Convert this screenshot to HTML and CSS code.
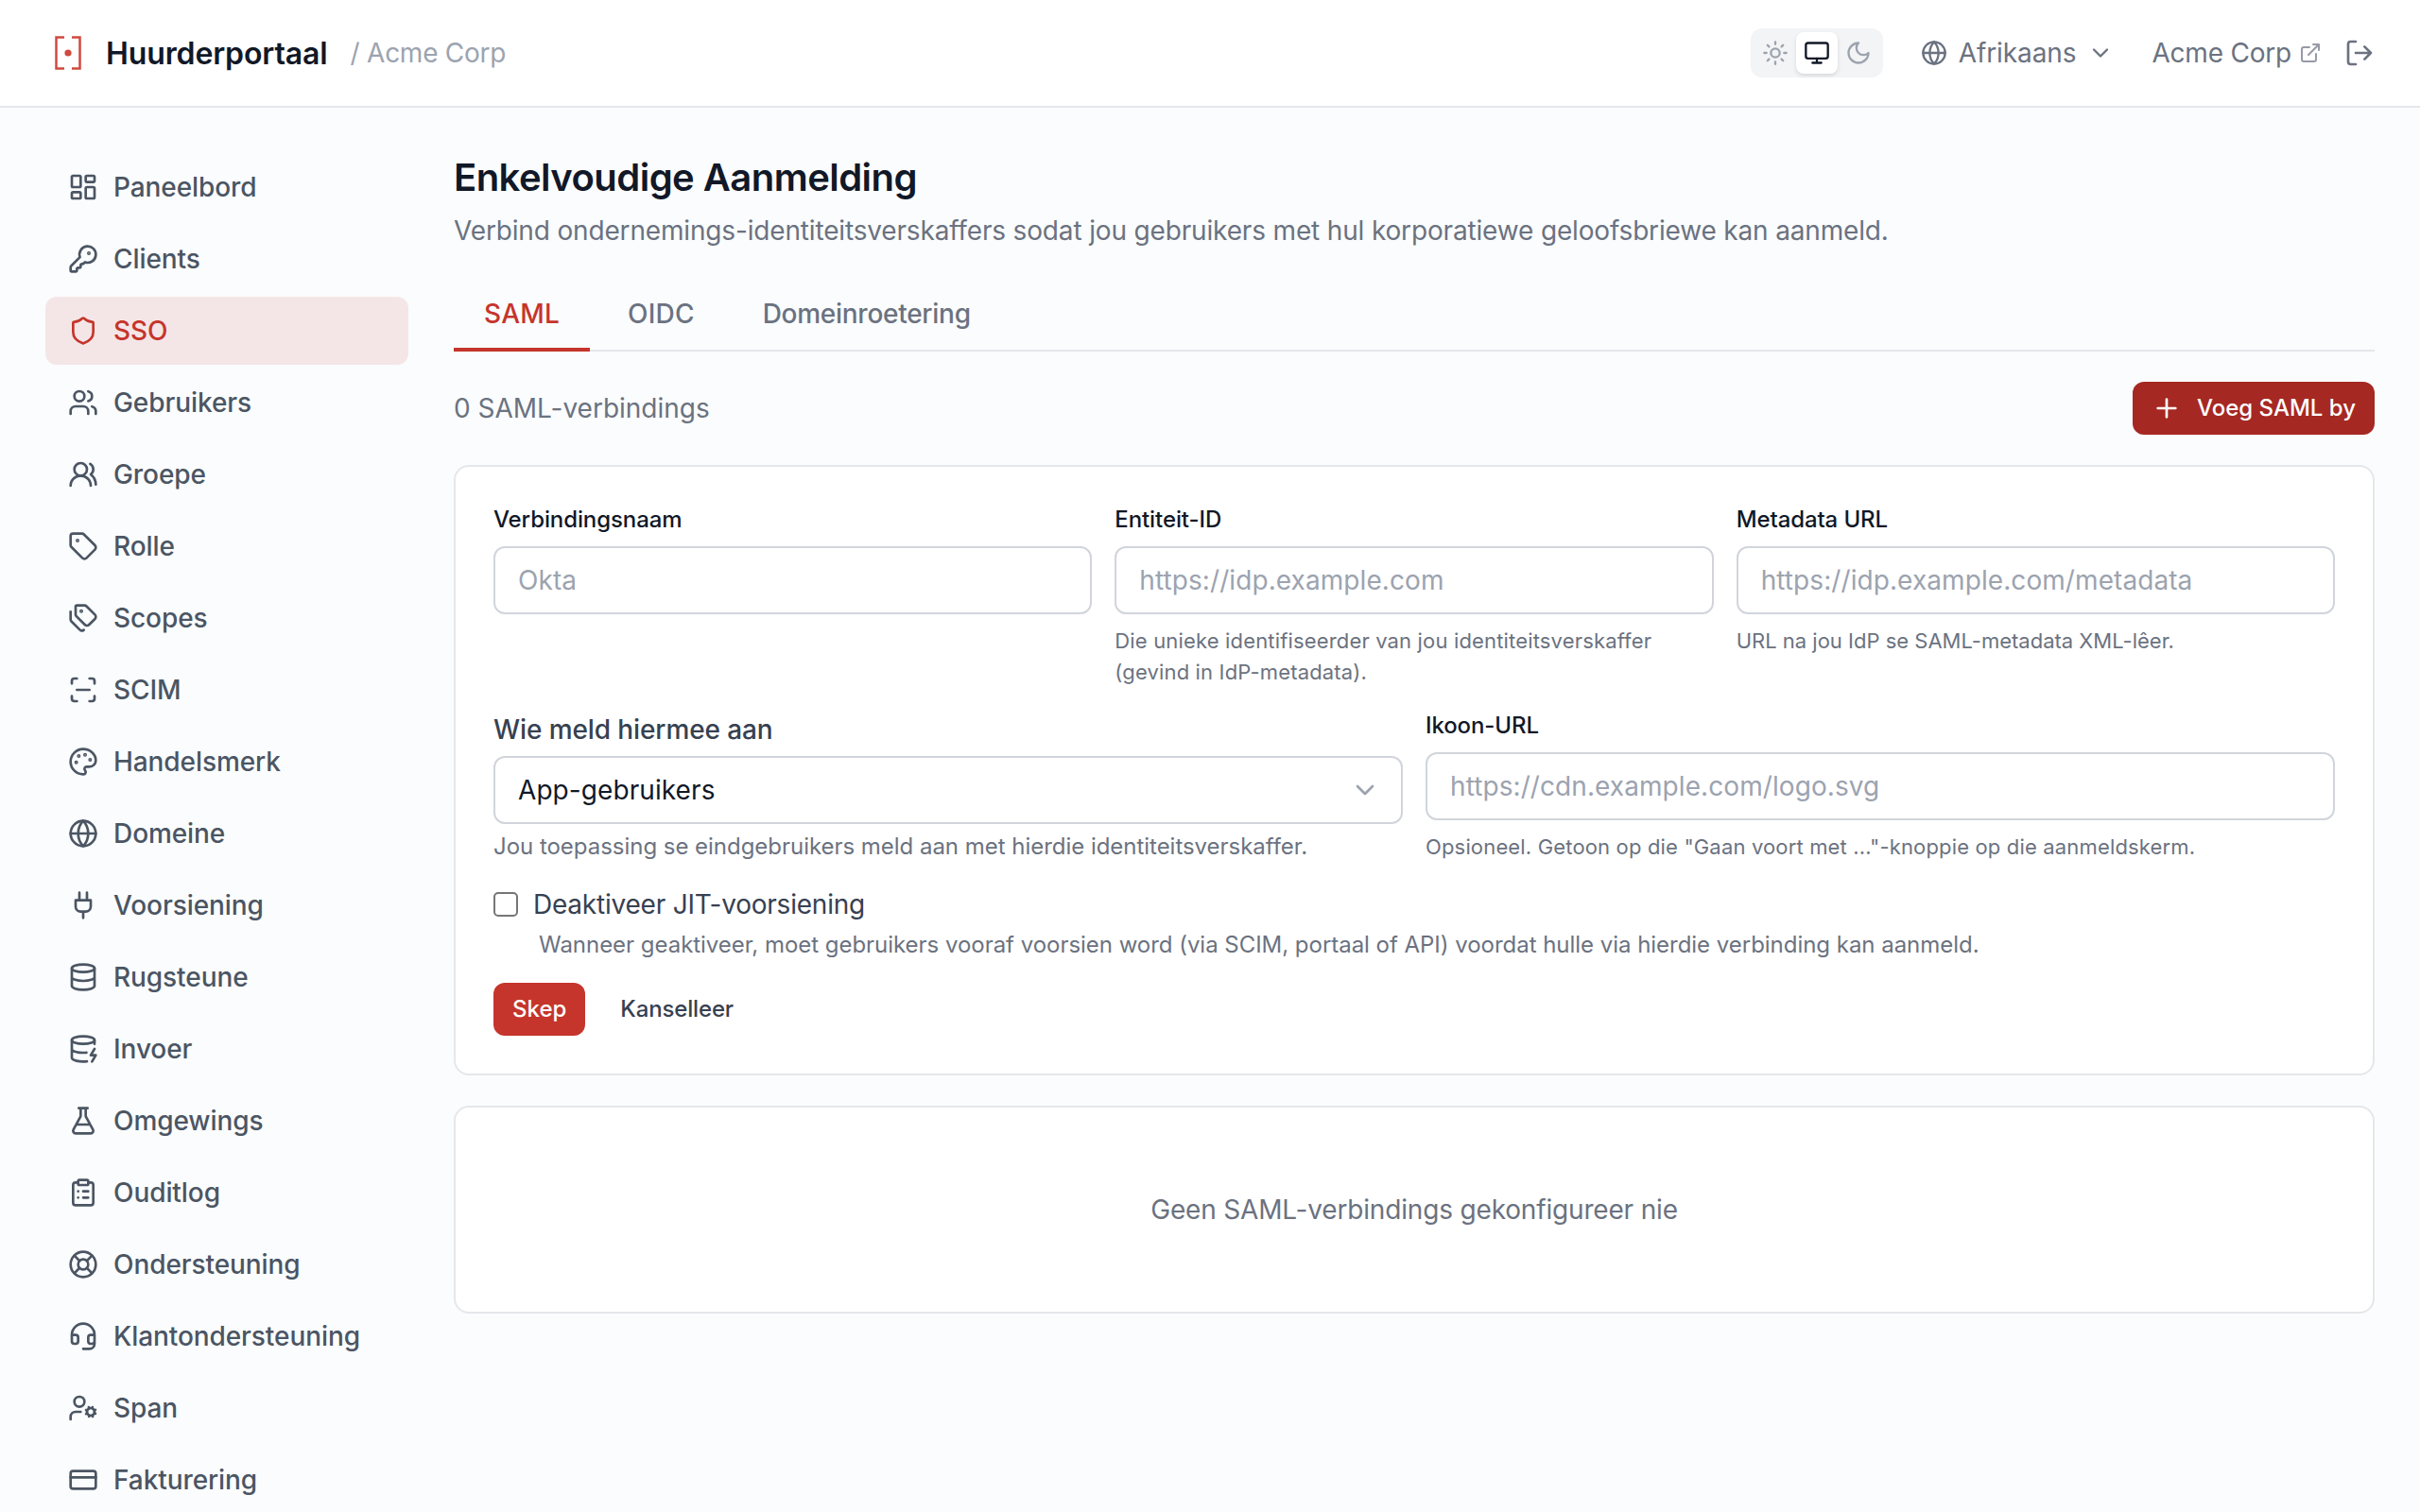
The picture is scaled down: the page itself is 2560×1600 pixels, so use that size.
FILE: index.html
```html
<!DOCTYPE html>
<html lang="af">
<head>
	<meta charset="utf-8">
	<title>Huurderportaal</title>
	<link rel="stylesheet" href="styles.css">
</head>
<body>
<header class="header">
	<svg class="logo" viewBox="0 0 48 48"><path d="M20 7.5H11.5v33H20M28 7.5h8.5v33H28"/><circle cx="24" cy="24" r="3.6"/></svg>
	<span class="brand">Huurderportaal</span>
	<span class="org">/ Acme Corp</span>
	<div class="tools">
		<div class="theme">
			<button><svg class="icon" viewBox="0 0 24 24"><circle cx="12" cy="12" r="4"/><path d="M12 2v2M12 20v2M4.93 4.93l1.41 1.41M17.66 17.66l1.41 1.41M2 12h2M20 12h2M6.34 17.66l-1.41 1.41M19.07 4.93l-1.41 1.41"/></svg></button>
			<button class="on"><svg class="icon" viewBox="0 0 24 24"><rect x="2" y="3" width="20" height="14" rx="2"/><path d="M8 21h8M12 17v4"/></svg></button>
			<button><svg class="icon" viewBox="0 0 24 24"><path d="M12 3a6 6 0 0 0 9 9 9 9 0 1 1-9-9Z"/></svg></button>
		</div>
		<div class="lang">
			<svg class="icon" viewBox="0 0 24 24"><circle cx="12" cy="12" r="10"/><path d="M12 2a14.5 14.5 0 0 0 0 20 14.5 14.5 0 0 0 0-20M2 12h20"/></svg>
			Afrikaans
			<svg class="icon" viewBox="0 0 24 24"><path d="m6 9 6 6 6-6"/></svg>
		</div>
		<div class="account">
			<a class="tenant">Acme Corp
				<svg class="icon" viewBox="0 0 24 24"><path d="M15 3h6v6M10 14 21 3M18 13v6a2 2 0 0 1-2 2H5a2 2 0 0 1-2-2V8a2 2 0 0 1 2-2h6"/></svg>
			</a>
			<svg class="icon logout" viewBox="0 0 24 24"><path d="M9 21H5a2 2 0 0 1-2-2V5a2 2 0 0 1 2-2h4M16 17l5-5-5-5M21 12H9"/></svg>
		</div>
	</div>
</header>
<div class="page">
	<nav class="sidebar">
		<a class="item"><svg class="icon" viewBox="0 0 24 24"><rect width="7" height="9" x="3" y="3" rx="1"/><rect width="7" height="5" x="14" y="3" rx="1"/><rect width="7" height="9" x="14" y="12" rx="1"/><rect width="7" height="5" x="3" y="16" rx="1"/></svg>Paneelbord</a>
		<a class="item"><svg class="icon" viewBox="0 0 24 24"><path d="M2.586 17.414A2 2 0 0 0 2 18.828V21a1 1 0 0 0 1 1h3a1 1 0 0 0 1-1v-1a1 1 0 0 1 1-1h1a1 1 0 0 0 1-1v-1a1 1 0 0 1 1-1h.172a2 2 0 0 0 1.414-.586l.814-.814a6.5 6.5 0 1 0-4-4z"/><circle class="dot" cx="16.5" cy="7.5" r=".5"/></svg>Clients</a>
		<a class="item active"><svg class="icon" viewBox="0 0 24 24"><path d="M20 13c0 5-3.5 7.5-7.66 8.95a1 1 0 0 1-.67-.01C7.5 20.5 4 18 4 13V6a1 1 0 0 1 1-1c2 0 4.5-1.2 6.24-2.72a1.17 1.17 0 0 1 1.52 0C14.51 3.81 17 5 19 5a1 1 0 0 1 1 1z"/></svg>SSO</a>
		<a class="item"><svg class="icon" viewBox="0 0 24 24"><path d="M16 21v-2a4 4 0 0 0-4-4H6a4 4 0 0 0-4 4v2M22 21v-2a4 4 0 0 0-3-3.87M16 3.13a4 4 0 0 1 0 7.75"/><circle cx="9" cy="7" r="4"/></svg>Gebruikers</a>
		<a class="item"><svg class="icon" viewBox="0 0 24 24"><path d="M18 21a8 8 0 0 0-16 0"/><circle cx="10" cy="8" r="5"/><path d="M22 20c0-3.37-2-6.5-4-8a5 5 0 0 0-.45-8.3"/></svg>Groepe</a>
		<a class="item"><svg class="icon" viewBox="0 0 24 24"><path d="M12.586 2.586A2 2 0 0 0 11.172 2H4a2 2 0 0 0-2 2v7.172a2 2 0 0 0 .586 1.414l8.704 8.704a2.426 2.426 0 0 0 3.42 0l6.58-6.58a2.426 2.426 0 0 0 0-3.42z"/><circle class="dot" cx="7.5" cy="7.5" r=".5"/></svg>Rolle</a>
		<a class="item"><svg class="icon" viewBox="0 0 24 24"><path d="M13.172 2a2 2 0 0 1 1.414.586l6.71 6.71a2.4 2.4 0 0 1 0 3.408l-4.592 4.592a2.4 2.4 0 0 1-3.408 0l-6.71-6.71A2 2 0 0 1 6 9.172V3a1 1 0 0 1 1-1zM2 7v6.172a2 2 0 0 0 .586 1.414l6.71 6.71a2.4 2.4 0 0 0 3.191.193"/><circle class="dot" cx="10.5" cy="6.5" r=".5"/></svg>Scopes</a>
		<a class="item"><svg class="icon" viewBox="0 0 24 24"><path d="M3 7V5a2 2 0 0 1 2-2h2M17 3h2a2 2 0 0 1 2 2v2M21 17v2a2 2 0 0 1-2 2h-2M7 21H5a2 2 0 0 1-2-2v-2M7 12h10"/></svg>SCIM</a>
		<a class="item"><svg class="icon" viewBox="0 0 24 24"><path d="M12 22a1 1 0 0 1 0-20 10 9 0 0 1 10 9 5 5 0 0 1-5 5h-2.25a1.75 1.75 0 0 0-1.4 2.8l.3.4a1.75 1.75 0 0 1-1.4 2.8z"/><circle class="dot" cx="13.5" cy="6.5" r=".5"/><circle class="dot" cx="17.5" cy="10.5" r=".5"/><circle class="dot" cx="8.5" cy="7.5" r=".5"/><circle class="dot" cx="6.5" cy="12.5" r=".5"/></svg>Handelsmerk</a>
		<a class="item"><svg class="icon" viewBox="0 0 24 24"><circle cx="12" cy="12" r="10"/><path d="M12 2a14.5 14.5 0 0 0 0 20 14.5 14.5 0 0 0 0-20M2 12h20"/></svg>Domeine</a>
		<a class="item"><svg class="icon" viewBox="0 0 24 24"><path d="M12 22v-5M9 8V2M15 8V2M18 8v5a4 4 0 0 1-4 4h-4a4 4 0 0 1-4-4V8Z"/></svg>Voorsiening</a>
		<a class="item"><svg class="icon" viewBox="0 0 24 24"><ellipse cx="12" cy="5" rx="9" ry="3"/><path d="M3 5v14a9 3 0 0 0 18 0V5M3 12a9 3 0 0 0 18 0"/></svg>Rugsteune</a>
		<a class="item"><svg class="icon" viewBox="0 0 24 24"><ellipse cx="12" cy="5" rx="9" ry="3"/><path d="M3 5v14a9 3 0 0 0 12 2.84M21 5v3M21 12l-3 5h4l-3 5M3 12a9 3 0 0 0 11.59 2.87"/></svg>Invoer</a>
		<a class="item"><svg class="icon" viewBox="0 0 24 24"><path d="M14 2v6a2 2 0 0 0 .245.96l5.51 10.08A2 2 0 0 1 18 22H6a2 2 0 0 1-1.755-2.96l5.51-10.08A2 2 0 0 0 10 8V2M6.453 15h11.094M8.5 2h7"/></svg>Omgewings</a>
		<a class="item"><svg class="icon" viewBox="0 0 24 24"><rect width="8" height="4" x="8" y="2" rx="1"/><path d="M16 4h2a2 2 0 0 1 2 2v14a2 2 0 0 1-2 2H6a2 2 0 0 1-2-2V6a2 2 0 0 1 2-2h2M12 11h4M12 16h4M8 11h.01M8 16h.01"/></svg>Ouditlog</a>
		<a class="item"><svg class="icon" viewBox="0 0 24 24"><circle cx="12" cy="12" r="10"/><circle cx="12" cy="12" r="4"/><path d="m4.93 4.93 4.24 4.24M14.83 9.17l4.24-4.24M14.83 14.83l4.24 4.24M9.17 14.83l-4.24 4.24"/></svg>Ondersteuning</a>
		<a class="item"><svg class="icon" viewBox="0 0 24 24"><path d="M3 11h3a2 2 0 0 1 2 2v3a2 2 0 0 1-2 2H5a2 2 0 0 1-2-2v-5Zm0 0a9 9 0 1 1 18 0m0 0v5a2 2 0 0 1-2 2h-1a2 2 0 0 1-2-2v-3a2 2 0 0 1 2-2h3ZM21 16v2a4 4 0 0 1-4 4h-5"/></svg>Klantondersteuning</a>
		<a class="item"><svg class="icon" viewBox="0 0 24 24"><circle cx="18" cy="15" r="3"/><circle cx="9" cy="7" r="4"/><path d="M10 15H6a4 4 0 0 0-4 4v2M21.7 16.4l-.9-.3M15.2 13.9l-.9-.3M16.6 18.7l.3-.9M19.1 12.2l.3-.9M19.6 18.7l-.4-1M16.8 12.3l-.4-1M14.3 16.6l1-.4M20.7 13.8l1-.4"/></svg>Span</a>
		<a class="item"><svg class="icon" viewBox="0 0 24 24"><rect width="20" height="14" x="2" y="5" rx="2"/><path d="M2 10h20"/></svg>Fakturering</a>
	</nav>
	<main class="main">
		<h1>Enkelvoudige Aanmelding</h1>
		<p class="sub">Verbind ondernemings-identiteitsverskaffers sodat jou gebruikers met hul korporatiewe geloofsbriewe kan aanmeld.</p>
		<div class="tabs">
			<a class="tab current">SAML</a>
			<a class="tab">OIDC</a>
			<a class="tab long">Domeinroetering</a>
		</div>
		<div class="bar">
			<span>0 SAML-verbindings</span>
			<button class="btn add"><svg class="icon" viewBox="0 0 24 24"><path d="M5 12h14M12 5v14"/></svg>Voeg SAML by</button>
		</div>
		<form class="card">
			<div class="cols three">
				<div class="field">
					<label>Verbindingsnaam</label>
					<input class="input" type="text" placeholder="Okta">
				</div>
				<div class="field">
					<label>Entiteit-ID</label>
					<input class="input" type="text" placeholder="https://idp.example.com">
					<p class="hint wide">Die unieke identifiseerder van jou identiteitsverskaffer (gevind in IdP-metadata).</p>
				</div>
				<div class="field">
					<label>Metadata URL</label>
					<input class="input" type="text" placeholder="https://idp.example.com/metadata">
					<p class="hint">URL na jou IdP se SAML-metadata XML-lêer.</p>
				</div>
			</div>
			<div class="cols two">
				<div class="field audience">
					<label>Wie meld hiermee aan</label>
					<div class="input select">App-gebruikers<svg class="icon" viewBox="0 0 24 24"><path d="m6 9 6 6 6-6"/></svg></div>
					<p class="note">Jou toepassing se eindgebruikers meld aan met hierdie identiteitsverskaffer.</p>
				</div>
				<div class="field">
					<label>Ikoon-URL</label>
					<input class="input" type="text" placeholder="https://cdn.example.com/logo.svg">
					<p class="hint wide">Opsioneel. Getoon op die "Gaan voort met ..."-knoppie op die aanmeldskerm.</p>
				</div>
			</div>
			<div class="jit">
				<label class="check"><span class="box"></span>Deaktiveer JIT-voorsiening</label>
				<p class="note">Wanneer geaktiveer, moet gebruikers vooraf voorsien word (via SCIM, portaal of API) voordat hulle via hierdie verbinding kan aanmeld.</p>
			</div>
			<div class="actions">
				<button class="btn" type="button">Skep</button>
				<button class="btn ghost" type="button">Kanselleer</button>
			</div>
		</form>
		<div class="card empty">Geen SAML-verbindings gekonfigureer nie</div>
	</main>
</div>
</body>
</html>
```

FILE: styles.css
```css
*{margin: 0;padding: 0;box-sizing: border-box;}
body{
	height: 1600px;
	overflow: hidden;
	background: #fafcfd;
	color: #111827;
	font: 28px/40px Inter, "Liberation Sans", sans-serif;
}
button{border: 0;background: none;font: inherit;color: inherit;}
.icon{
	width: 28px;
	height: 28px;
	flex: none;
	fill: none;
	stroke: currentColor;
	stroke-width: 2;
	stroke-linecap: round;
	stroke-linejoin: round;
}
.icon .dot{fill: currentColor;}

/* top bar */
.header{
	height: 114px;
	padding: 0 48px;
	display: flex;
	align-items: center;
	background: #fff;
	border-bottom: 2px solid #e5e7eb;
}
.logo{width: 48px;height: 48px;fill: none;stroke: #d04a3e;stroke-width: 2.5;}
.logo circle{fill: #d04a3e;stroke: none;}
.brand{margin-left: 16px;padding-top: 1px;font-size: 32px;font-weight: 600;letter-spacing: -.12px;}
.org{margin-left: 24px;color: #9ca3af;letter-spacing: -.25px;}
.tools{margin-left: auto;display: flex;align-items: center;gap: 40px;color: #6b7280;}
.theme{display: flex;padding: 4px;border-radius: 12px;background: #f3f4f6;color: #9ca3af;}
.theme button{width: 44px;height: 44px;display: flex;align-items: center;justify-content: center;border-radius: 8px;}
.theme .on{background: #fff;color: #111827;box-shadow: 0 2px 4px rgba(0,0,0,.12);}
.lang{display: flex;align-items: center;gap: 12px;letter-spacing: -.1px;}
.account{display: flex;align-items: center;gap: 24px;}
.tenant{display: flex;align-items: center;gap: 8px;letter-spacing: -.2px;}
.tenant .icon{width: 24px;height: 24px;opacity: .7;}
.logout{width: 32px;height: 32px;}

.page{display: flex;gap: 48px;padding: 48px;}

/* left menu */
.sidebar{width: 384px;flex: none;display: flex;flex-direction: column;gap: 4px;}
.item{
	display: flex;
	align-items: center;
	gap: 16px;
	padding: 16px 24px;
	border-radius: 12px;
	font-weight: 500;
	letter-spacing: -.08px;
	color: #4b5563;
}
.item .icon{width: 32px;height: 32px;}
.item.active{background: #f4e6e7;color: #c5352b;}

.main{flex: 1;min-width: 0;}
h1{font-size: 40px;font-weight: 600;line-height: 52px;letter-spacing: -.54px;}
.sub{margin-top: 10px;color: #6b7280;letter-spacing: -.16px;}
.tabs{
	display: flex;
	gap: 8px;
	margin-top: 32px;
	height: 76px;
	border-bottom: 2px solid #e5e7eb;
}
.tab{height: 76px;padding: 16px 32px;font-weight: 500;color: #6b7280;letter-spacing: .2px;}
.tab.long{letter-spacing: -.27px;}
.tab.current{color: #c5352b;border-bottom: 4px solid #c5352b;}
.bar{display: flex;align-items: center;justify-content: space-between;margin: 32px 0;color: #6b7280;}
.btn{
	height: 56px;
	padding: 0 20px;
	display: flex;
	align-items: center;
	border-radius: 12px;
	background: #c5352b;
	color: #fff;
	font-size: 24px;
	font-weight: 500;
}
.btn .icon{width: 32px;height: 32px;margin-right: 16px;}
.btn.add{background: #a62822;}
.btn.ghost{background: none;color: #374151;letter-spacing: -.15px;}

.card{
	padding: 40px;
	background: #fff;
	border: 2px solid #e5e7eb;
	border-radius: 16px;
}
.cols{display: grid;gap: 24px;margin-bottom: 24px;}
.three{grid-template-columns: repeat(3, 1fr);}
.two{grid-template-columns: repeat(2, 1fr);}
.field label{
	display: block;
	height: 32px;
	margin-bottom: 12px;
	font-size: 24px;
	line-height: 32px;
	font-weight: 500;
	letter-spacing: -.1px;
}
.input{
	display: block;
	width: 100%;
	height: 72px;
	padding: 0 24px;
	border: 2px solid #d1d5db;
	border-radius: 12px;
	background: #fff;
	font: inherit;
	letter-spacing: .08px;
	color: #111827;
}
.input::placeholder{color: #9ca3af;}
.hint{margin-top: 12px;font-size: 22px;line-height: 33px;color: #6b7280;}
.hint.wide{letter-spacing: .16px;}
.audience label{height: 40px;margin-bottom: 8px;font-size: 28px;line-height: 40px;color: #374151;}
.select{display: flex;align-items: center;justify-content: space-between;padding-right: 22px;}
.select .icon{width: 32px;height: 32px;color: #9ca3af;}
.note{margin-top: 8px;font-size: 24px;line-height: 32px;letter-spacing: -.03px;color: #6b7280;}
.check{display: flex;align-items: center;gap: 16px;letter-spacing: -.22px;color: #374151;}
.box{width: 26px;height: 26px;border: 2px solid #767676;border-radius: 5px;}
.jit .note{margin: 7px 0 24px 48px;}
.actions{display: flex;gap: 17px;}
.empty{margin-top: 32px;padding: 88px 40px;text-align: center;letter-spacing: -.17px;color: #6b7280;}
```
